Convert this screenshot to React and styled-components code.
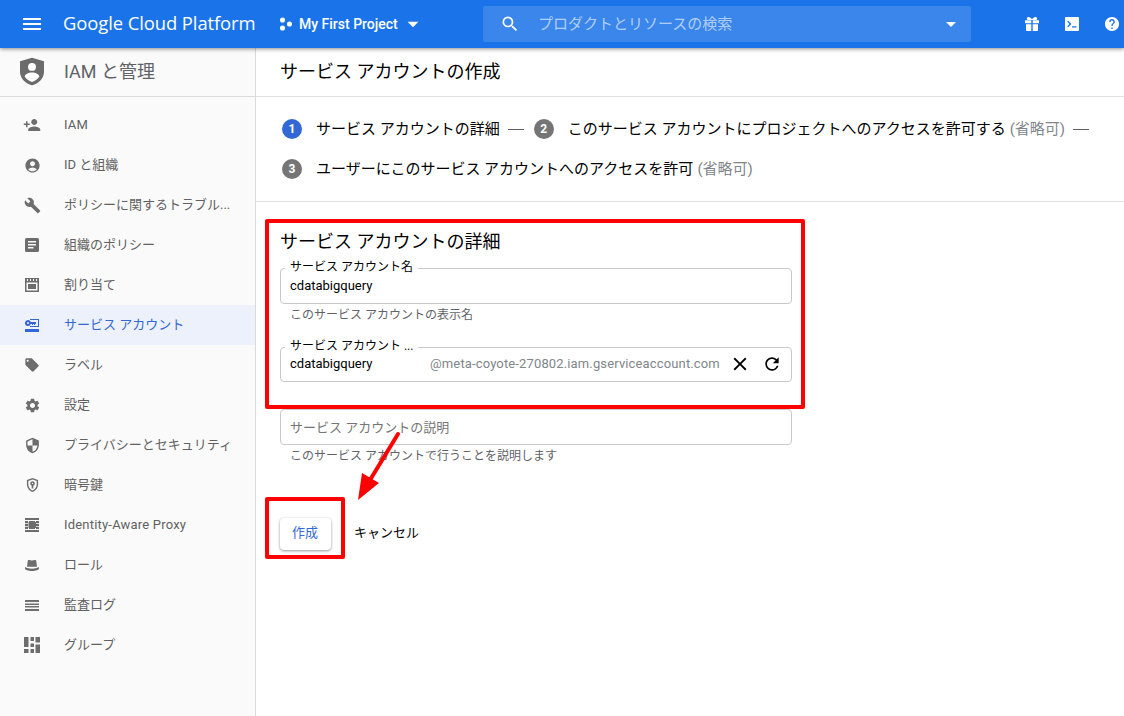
import React from "react";
import styled, { createGlobalStyle } from "styled-components";
import {
  MdMenu, MdSearch, MdArrowDropDown, MdPersonAdd, MdAccountCircle, MdBuild,
  MdLocalOffer, MdSettings, MdSecurity, MdClose, MdRefresh,
} from "react-icons/md";

const FONT = `Roboto, "Noto Sans CJK JP", sans-serif`;

const Global = createGlobalStyle`
  html, body { margin: 0; padding: 0; height: 100%; overflow: hidden; background: #fff; }
  body { font-family: ${FONT}; color: #000; }
  * { box-sizing: border-box; }
`;

const Page = styled.div`
  position: relative;
  width: 1124px;
  height: 716px;
  overflow: hidden;
  display: flex;
  flex-direction: column;
`;

const TopBar = styled.header`
  position: relative;
  z-index: 2;
  height: 48px;
  flex: none;
  background: #1a73e8;
  box-shadow: 0 1px 4px rgba(0, 0, 0, 0.45);
  color: #fff;
  display: flex;
  align-items: center;
`;

const MenuButton = styled.div`
  width: 63px;
  padding-left: 20px;
  display: flex;
  align-items: center;
  font-size: 24px;
`;

const Brand = styled.div`
  width: 216px;
  padding-bottom: 3px;
  font-family: "Open Sans", Roboto, sans-serif;
  font-size: 18.45px;
  white-space: nowrap;
  letter-spacing: -0.1px;
`;

const ProjectPicker = styled.div`
  width: 204px;
  display: flex;
  align-items: center;
  font-size: 14px;
  font-weight: 500;
  svg { flex: none; }
`;

const ProjectName = styled.span`
  margin-left: 6px;
  margin-right: 2px;
  padding-bottom: 1px;
  white-space: nowrap;
`;

const SearchBox = styled.div`
  width: 488px;
  height: 36px;
  border-radius: 2px;
  background: rgba(255, 255, 255, 0.14);
  display: flex;
  align-items: center;
  padding-left: 17px;
  font-size: 18px;
`;

const SearchText = styled.span`
  flex: 1;
  margin-left: 18px;
  padding-bottom: 4px;
  font-size: 15px;
  color: rgba(255, 255, 255, 0.62);
`;

const SearchCaret = styled.span`
  display: flex;
  margin-right: 8px;
  font-size: 24px;
`;

const TopActions = styled.div`
  flex: 1;
  display: flex;
  align-items: center;
  padding-left: 54px;
  gap: 26px;
  svg { flex: none; }
`;

const Body = styled.div`
  flex: 1;
  display: flex;
  min-height: 0;
`;

const Sidebar = styled.nav`
  width: 256px;
  flex: none;
  background: #fafafa;
  border-right: 1px solid #dadada;
`;

const SideHeader = styled.div`
  height: 49px;
  border-bottom: 1px solid #dadada;
  display: flex;
  align-items: center;
  padding: 0 0 2px 20px;
  gap: 20px;
  font-size: 18px;
  color: #5f6368;
`;

const SideTitle = styled.span`
  padding-bottom: 2px;
`;

const SideList = styled.div`
  padding-top: 8px;
`;

const SideRow = styled.div`
  height: 40px;
  display: flex;
  align-items: center;
  padding-left: 22px;
  gap: 22px;
  font-size: 13px;
  white-space: nowrap;
  color: ${(p) => (p.$active ? "#3367d6" : "#616161")};
  background: ${(p) => (p.$active ? "#ecf1fb" : "transparent")};
`;

const SideLabel = styled.span`
  padding-bottom: ${(p) => (p.$latin ? 2 : 4)}px;
  letter-spacing: ${(p) => (p.$latin ? 0.2 : 0)}px;
`;

const IconSlot = styled.span`
  width: 20px;
  height: 20px;
  flex: none;
  display: flex;
  align-items: center;
  justify-content: center;
  color: ${(p) => (p.$active ? "#3367d6" : "#6d6d6d")};
`;

const Main = styled.main`
  flex: 1;
  min-width: 0;
`;

const PageTitleBar = styled.div`
  height: 49px;
  border-bottom: 1px solid #e0e0e0;
  padding: 0 0 5px 24px;
  display: flex;
  align-items: center;
  font-size: 18px;
`;

const Stepper = styled.div`
  height: 105px;
  border-bottom: 1px solid #e0e0e0;
  padding: 12px 0 0 26px;
  display: flex;
  flex-wrap: wrap;
  align-content: flex-start;
`;

const Step = styled.div`
  height: 40px;
  display: flex;
  align-items: center;
  font-size: 15px;
  white-space: nowrap;
`;

const StepNumber = styled.span`
  width: 20px;
  height: 20px;
  border-radius: 50%;
  background: ${(p) => (p.$active ? "#3367d6" : "#757575")};
  color: #fff;
  font-size: 12px;
  font-weight: 700;
  display: flex;
  align-items: center;
  justify-content: center;
  margin-right: 14px;
`;

const StepText = styled.span`
  padding-bottom: 4px;
`;

const Optional = styled.span`
  color: #80868b;
  margin-left: 4px;
`;

const Dash = styled.span`
  width: 16px;
  height: 1px;
  background: #5f6368;
  margin: 0 10px 0 8px;
`;

const Form = styled.section`
  padding: 27px 0 0 24px;
  width: 560px;
`;

const FormTitle = styled.h2`
  margin: 0 0 13px;
  font-size: 18px;
  font-weight: 400;
  line-height: 26px;
`;

const Field = styled.div`
  position: relative;
  width: 512px;
  height: ${(p) => (p.$short ? 35 : 36)}px;
  border: 1px solid #c9c9c9;
  border-radius: 4px;
  display: flex;
  align-items: center;
  padding: 0 9px;
  font-size: 13px;
  margin-bottom: ${(p) => p.$after || 0}px;
`;

const FieldLabel = styled.span`
  position: absolute;
  left: 4px;
  top: -9px;
  background: #fff;
  padding: 0 5px;
  font-size: 12px;
  line-height: 15px;
  white-space: nowrap;
`;

const FieldValue = styled.span`
  width: 140px;
  padding-bottom: 2px;
  font-size: 13px;
`;

const Placeholder = styled.span`
  padding-bottom: 2px;
  color: #757575;
`;

const Suffix = styled.span`
  flex: 1;
  padding-bottom: 2px;
  font-size: 13px;
  letter-spacing: 0.14px;
  color: #80868b;
  white-space: nowrap;
`;

const FieldButton = styled.span`
  display: flex;
  padding-bottom: 2px;
  font-size: ${(p) => p.$size || 20}px;
  margin-left: ${(p) => p.$gap || 0}px;
  color: #000;
`;

const Helper = styled.div`
  font-size: 12px;
  line-height: 20px;
  height: 20px;
  margin: 1px 0 ${(p) => p.$after || 0}px 10px;
  color: #5f6368;
`;

const Actions = styled.div`
  margin-top: 52px;
  display: flex;
  align-items: center;
  gap: 23px;
`;

const PrimaryButton = styled.button`
  width: 51px;
  height: 32px;
  border: 0;
  border-radius: 4px;
  background: #fff;
  box-shadow: 0 1px 3px rgba(0, 0, 0, 0.42);
  color: #3367d6;
  font: 13px ${FONT};
  padding: 0 1px 5px 0;
`;

const TextButton = styled.span`
  padding-bottom: 5px;
  font-size: 13px;
`;

const Annotation = styled.div`
  position: absolute;
  left: ${(p) => p.$x}px;
  top: ${(p) => p.$y}px;
  width: ${(p) => p.$w}px;
  height: ${(p) => p.$h}px;
  border: 4px solid #f00;
  border-radius: 2px;
  pointer-events: none;
`;

const ArrowOverlay = styled.svg`
  position: absolute;
  left: 350px;
  top: 430px;
  pointer-events: none;
`;

const Svg = ({ children, w = 14, h = 14, vb }) => (
  <svg width={w} height={h} viewBox={vb || `0 0 ${w} ${h}`} fill="currentColor">{children}</svg>
);

const ShieldLogo = () => (
  <svg width="24" height="29" viewBox="0 0 26 30">
    <path fill="#6b6b6b" d="M13 0 26 4v11c0 7.5-5.2 12.6-13 15C5.2 27.6 0 22.500 0 15V4z" />
    <circle cx="13" cy="10" r="4.300" fill="#fff" />
    <path fill="#fff" d="M13 16c4.300 0 7.500 2 8 4.500-1.700 2.700-4.500 4.700-8 6-3.500-1.300-6.300-3.300-8-6 .5-2.500 3.700-4.500 8-4.500z" />
  </svg>
);

const ProjectDots = () => (
  <Svg vb="0 0 16 16">
    <circle cx="4" cy="3.500" r="2.900" /><circle cx="12" cy="8" r="2.900" /><circle cx="4" cy="12.500" r="2.900" />
  </Svg>
);

const Gift = () => (
  <Svg>
    <path d="M0 3.200h6.300v3H0zM7.700 3.200H14v3H7.700zM1 7.300h5.300V14H2a1 1 0 0 1-1-1zM7.700 7.300H13V13a1 1 0 0 1-1 1H7.700zM3.500 0C5 0 6.200 1 7 2.300 7.800 1 9 0 10.500 0c1.200 0 1.700.8 1.700 1.500 0 1-.8 1.500-2 1.500H3.800c-1.200 0-2-.5-2-1.500C1.800.8 2.300 0 3.500 0z" />
  </Svg>
);

const Terminal = () => (
  <Svg>
    <path fillRule="evenodd" d="M1 0h12a1 1 0 0 1 1 1v12a1 1 0 0 1-1 1H1a1 1 0 0 1-1-1V1a1 1 0 0 1 1-1zm2.200 3.700-1 1L4.500 7 2.200 9.300l1 1L6.500 7zM7 9.200v1.300h4.500V9.200z" />
  </Svg>
);

const Help = () => (
  <Svg vb="2 2 20 20">
    <path d="M12 2C6.480 2 2 6.480 2 12s4.480 10 10 10 10-4.480 10-10S17.520 2 12 2zm1 17h-2v-2h2v2zm2.070-7.750-.9.920C13.450 12.900 13 13.500 13 15h-2v-.5c0-1.100.45-2.100 1.170-2.830l1.240-1.260c.37-.36.59-.86.590-1.410 0-1.100-.9-2-2-2s-2 .9-2 2H8c0-2.210 1.790-4 4-4s4 1.790 4 4c0 .88-.36 1.680-.93 2.250z" />
  </Svg>
);

const Policy = () => (
  <Svg><path fillRule="evenodd" d="M1.500 0h11A1.500 1.500 0 0 1 14 1.500v11a1.500 1.500 0 0 1-1.500 1.500h-11A1.500 1.500 0 0 1 0 12.500v-11A1.500 1.500 0 0 1 1.500 0zM3 3v1.500h8V3zm0 3v1.500h8V6zm0 3v1.500h5.500V9z" /></Svg>
);

const Quota = () => (
  <Svg><path fillRule="evenodd" d="M0 0h14v14H0zM2 1v2h1V1zM5 1v2h1V1zM8 1v2h1V1zM11 1v2h1V1zM1.500 4.500V12.500h11V4.500zM3 6h8v5H3z" /></Svg>
);

const ServiceKey = () => (
  <Svg w={14} h={13}>
    <path fillRule="evenodd" d="M5 0h9v8H5V7h8V1H5zM3 1a3 3 0 0 1 2.800 2H11v2h-1v1H9V5H8v1H7V5H5.800A3 3 0 1 1 3 1zm0 2a1 1 0 1 0 0 2 1 1 0 0 0 0-2z" />
    <rect x="0" y="10" width="14" height="3" />
  </Svg>
);

const KeyShield = () => (
  <Svg w={13} h={14} vb="4 2 16 20">
    <path fillRule="evenodd" d="M12 2 20 5v6c0 5-3.400 9.400-8 11-4.600-1.600-8-6-8-11V5zm0 2.200L6 6.400V11c0 3.900 2.500 7.400 6 8.900 3.500-1.500 6-5 6-8.900V6.400z" />
    <path fillRule="evenodd" d="M12 6.500a3.300 3.300 0 0 1 1.200 6.400V17h-2.400v-4.100A3.300 3.300 0 0 1 12 6.500zm0 2.200a1 1 0 1 0 0 2 1 1 0 0 0 0-2z" />
  </Svg>
);

const Proxy = () => (
  <Svg>
    <path d="M0 0h14v2H0zM0 12h14v2H0zM0 3h3v2.300H0zM0 6h3v2H0zM0 8.700h3V11H0zM11 3h3v2.300h-3zM11 6h3v2h-3zM11 8.700h3V11h-3zM4 3h6v1h1v6h-1v1H4v-1H3.500V4H4z" />
  </Svg>
);

const Hat = () => (
  <Svg w={14} h={11}>
    <path d="M3.800 0C5 0 6 .6 7 .6S9 0 10.200 0c.7 0 1 .5 1.100 1.200L12 6.700H2l.7-5.500C2.800.5 3.100 0 3.800 0zM0 7c2 1.100 4.500 1.700 7 1.700S12 8.100 14 7v1.500C14 10 10.800 11 7 11S0 10 0 8.500z" />
  </Svg>
);

const Lines = () => (
  <Svg w={14} h={11}><path d="M0 0h14v2H0zM0 3.500h14V5H0zM0 6h14v1.500H0zM0 9h14v2H0z" /></Svg>
);

const Grid = () => (
  <Svg w={16} h={16}>
    <path d="M0 0h4.500v10H0zM0 12h4.500v4H0zM6.500 0H10v4H6.500zM6.500 6.500H10V10H6.500zM6.500 12H10v4H6.500zM11.500 0H16v5.500h-4.500zM11.500 7.500H16V16h-4.500z" />
  </Svg>
);

const navItems = [
  { label: "IAM", icon: <MdPersonAdd size={18} />, latin: true },
  { label: "ID と組織", icon: <MdAccountCircle size={17} /> },
  { label: "ポリシーに関するトラブル...", icon: <MdBuild size={17} /> },
  { label: "組織のポリシー", icon: <Policy /> },
  { label: "割り当て", icon: <Quota /> },
  { label: "サービス アカウント", icon: <ServiceKey />, active: true },
  { label: "ラベル", icon: <MdLocalOffer size={16} /> },
  { label: "設定", icon: <MdSettings size={17} /> },
  { label: "プライバシーとセキュリティ", icon: <MdSecurity size={17} /> },
  { label: "暗号鍵", icon: <KeyShield /> },
  { label: "Identity-Aware Proxy", icon: <Proxy />, latin: true },
  { label: "ロール", icon: <Hat /> },
  { label: "監査ログ", icon: <Lines /> },
  { label: "グループ", icon: <Grid /> },
];

export default function App() {
  return (
    <Page>
      <Global />
      <TopBar>
        <MenuButton><MdMenu /></MenuButton>
        <Brand>Google Cloud Platform</Brand>
        <ProjectPicker>
          <ProjectDots />
          <ProjectName>My First Project</ProjectName>
          <MdArrowDropDown size={26} />
        </ProjectPicker>
        <SearchBox>
          <MdSearch size={20} />
          <SearchText>プロダクトとリソースの検索</SearchText>
          <SearchCaret><MdArrowDropDown /></SearchCaret>
        </SearchBox>
        <TopActions>
          <Gift />
          <Terminal />
          <Help />
        </TopActions>
      </TopBar>
      <Body>
        <Sidebar>
          <SideHeader><ShieldLogo /><SideTitle>IAM と管理</SideTitle></SideHeader>
          <SideList>
            {navItems.map((item) => (
              <SideRow key={item.label} $active={item.active}>
                <IconSlot $active={item.active}>{item.icon}</IconSlot>
                <SideLabel $latin={item.latin}>{item.label}</SideLabel>
              </SideRow>
            ))}
          </SideList>
        </Sidebar>
        <Main>
          <PageTitleBar>サービス アカウントの作成</PageTitleBar>
          <Stepper>
            <Step><StepNumber $active>1</StepNumber><StepText>サービス アカウントの詳細</StepText><Dash /></Step>
            <Step><StepNumber>2</StepNumber><StepText>このサービス アカウントにプロジェクトへのアクセスを許可する<Optional>(省略可)</Optional></StepText><Dash /></Step>
            <Step><StepNumber>3</StepNumber><StepText>ユーザーにこのサービス アカウントへのアクセスを許可<Optional>(省略可)</Optional></StepText></Step>
          </Stepper>
          <Form>
            <FormTitle>サービス アカウントの詳細</FormTitle>
            <Field>
              <FieldLabel>サービス アカウント名</FieldLabel>
              <FieldValue>cdatabigquery</FieldValue>
            </Field>
            <Helper $after={22}>このサービス アカウントの表示名</Helper>
            <Field $short $after={27}>
              <FieldLabel>サービス アカウント ...</FieldLabel>
              <FieldValue>cdatabigquery</FieldValue>
              <Suffix>@meta-coyote-270802.iam.gserviceaccount.com</Suffix>
              <FieldButton $size={22}><MdClose /></FieldButton>
              <FieldButton $gap={11}><MdRefresh /></FieldButton>
            </Field>
            <Field>
              <Placeholder>サービス アカウントの説明</Placeholder>
            </Field>
            <Helper>このサービス アカウントで行うことを説明します</Helper>
            <Actions>
              <PrimaryButton>作成</PrimaryButton>
              <TextButton>キャンセル</TextButton>
            </Actions>
          </Form>
        </Main>
      </Body>
      <Annotation $x={265} $y={219} $w={540} $h={190} />
      <Annotation $x={265} $y={497} $w={80} $h={62} />
      <ArrowOverlay width="60" height="75" viewBox="0 0 60 75" fill="#f00">
        <path d="M48 4 L20 50" stroke="#f00" strokeWidth="4" strokeLinecap="round" />
        <path d="M8 70 L12 43 L29 53 Z" />
      </ArrowOverlay>
    </Page>
  );
}
